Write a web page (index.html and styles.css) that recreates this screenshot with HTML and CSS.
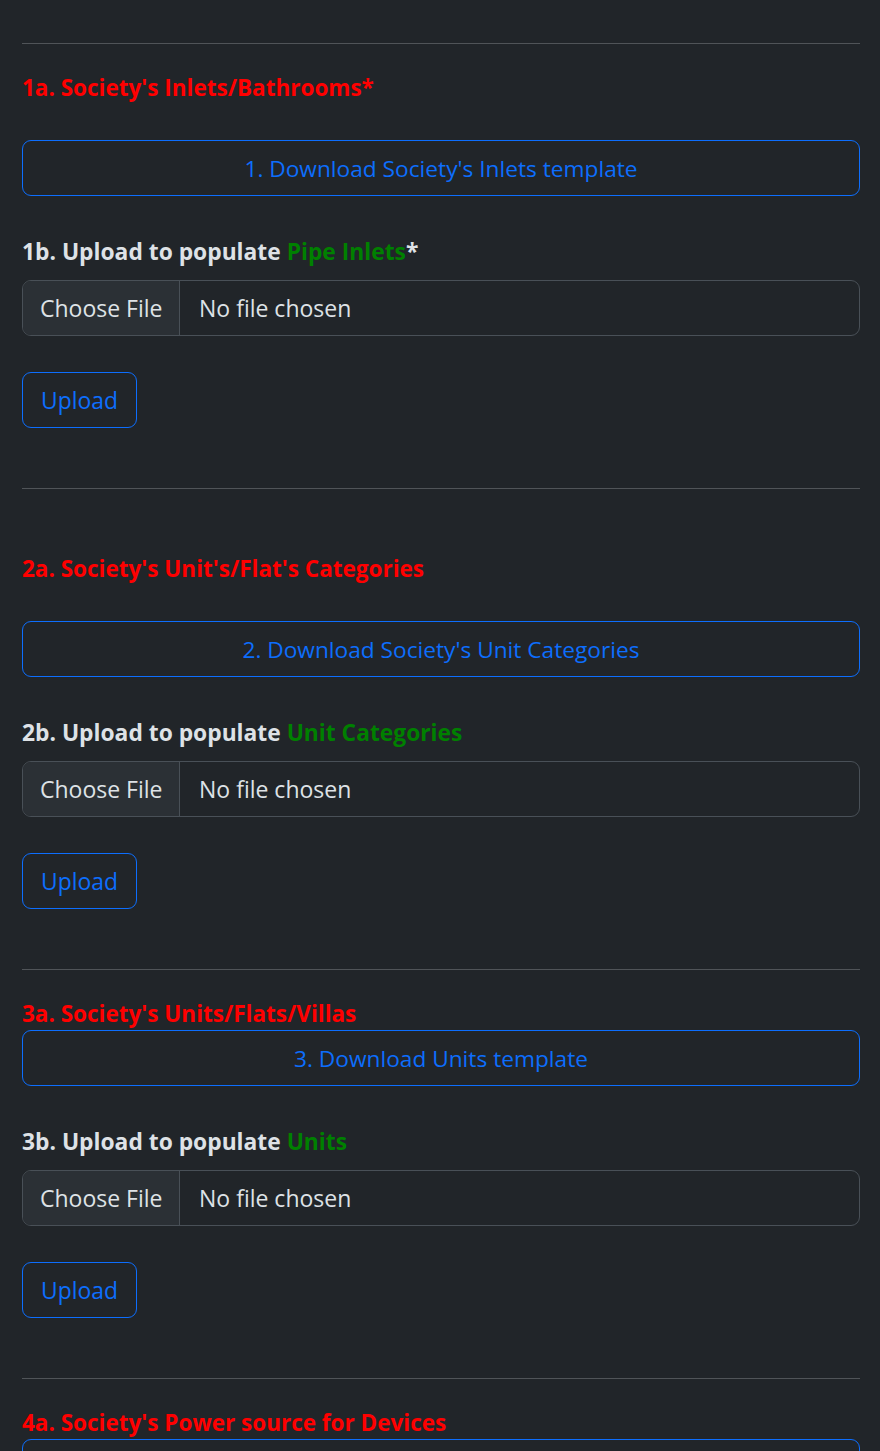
FILE: index.html
```html
<!DOCTYPE html>
<html lang="en">
<head>
<meta charset="utf-8">
<title>Society setup</title>
<link rel="stylesheet" href="styles.css">
</head>
<body>
<main class="container">
  <section class="block">
    <hr class="rule">
    <h4 class="title title-spaced">1a. Society's Inlets/Bathrooms*</h4>
    <button class="btn btn-wide" type="button">1. Download Society's Inlets template</button>
    <label class="label">1b. Upload to populate <span class="green">Pipe Inlets</span>*</label>
    <div class="file"><span class="file-btn">Choose File</span><span class="file-name">No file chosen</span></div>
    <button class="btn btn-upload" type="button">Upload</button>
  </section>
  <section class="block">
    <hr class="rule">
    <h4 class="title title-spaced title-low">2a. Society's Unit's/Flat's Categories</h4>
    <button class="btn btn-wide" type="button">2. Download Society's Unit Categories</button>
    <label class="label">2b. Upload to populate <span class="green">Unit Categories</span></label>
    <div class="file"><span class="file-btn">Choose File</span><span class="file-name">No file chosen</span></div>
    <button class="btn btn-upload" type="button">Upload</button>
  </section>
  <section class="block">
    <hr class="rule">
    <h4 class="title">3a. Society's Units/Flats/Villas</h4>
    <button class="btn btn-wide" type="button">3. Download Units template</button>
    <label class="label">3b. Upload to populate <span class="green">Units</span></label>
    <div class="file"><span class="file-btn">Choose File</span><span class="file-name">No file chosen</span></div>
    <button class="btn btn-upload" type="button">Upload</button>
  </section>
  <section class="block">
    <hr class="rule">
    <h4 class="title">4a. Society's Power source for Devices</h4>
    <div class="btn btn-wide btn-edge" aria-hidden="true"></div>
  </section>
</main>
</body>
</html>
```

FILE: styles.css
```css
html, body {
  margin: 0;
  padding: 0;
  background: #212529;
  color: #dee2e6;
  font-family: "Open Sans", "Noto Sans", sans-serif;
  font-size: 23px;
}

.container {
  padding: 43px 20px 0 22px;
  height: 1451px;
  overflow: hidden;
  box-sizing: border-box;
}

.block {
  display: flex;
  flex-direction: column;
  align-items: flex-start;
}

.rule {
  width: 100%;
  margin: 0;
  border: 0;
  border-top: 1px solid #505458;
  height: 0;
}

.block + .block { margin-top: 60px; }

.title {
  margin: 29px 0 1px;
  font-size: 22.5px;
  line-height: 30px;
  font-weight: 700;
  color: #ff0000;
}

.title-spaced { margin-bottom: 37px; }
.title-low { margin-top: 65px; }

.btn {
  box-sizing: border-box;
  height: 56px;
  background: transparent;
  border: 1px solid #0d6efd;
  border-radius: 9px;
  color: #0d6efd;
  font-family: inherit;
  font-size: 22.9px;
  padding: 0 18px;
  cursor: pointer;
}

.btn-wide {
  width: 100%;
  text-align: center;
  font-size: 22.7px;
}

.btn-edge {
  flex-shrink: 0;
}

.btn-upload {
  margin-top: 36px;
}

.label {
  margin-top: 38px;
  font-size: 22.8px;
  line-height: 36px;
  font-weight: 700;
  color: #dee2e6;
}

.green { color: #008000; }

.file {
  box-sizing: border-box;
  margin-top: 10px;
  width: 100%;
  height: 56px;
  display: flex;
  align-items: stretch;
  border: 1px solid #495057;
  border-radius: 9px;
  overflow: hidden;
  font-size: 23px;
}

.file-btn {
  display: flex;
  align-items: center;
  width: 157px;
  box-sizing: border-box;
  padding-left: 17px;
  background: #2b3035;
  border-right: 1px solid #495057;
  color: #dee2e6;
}

.file-name {
  display: flex;
  align-items: center;
  padding-left: 19px;
  color: #dee2e6;
}
```
